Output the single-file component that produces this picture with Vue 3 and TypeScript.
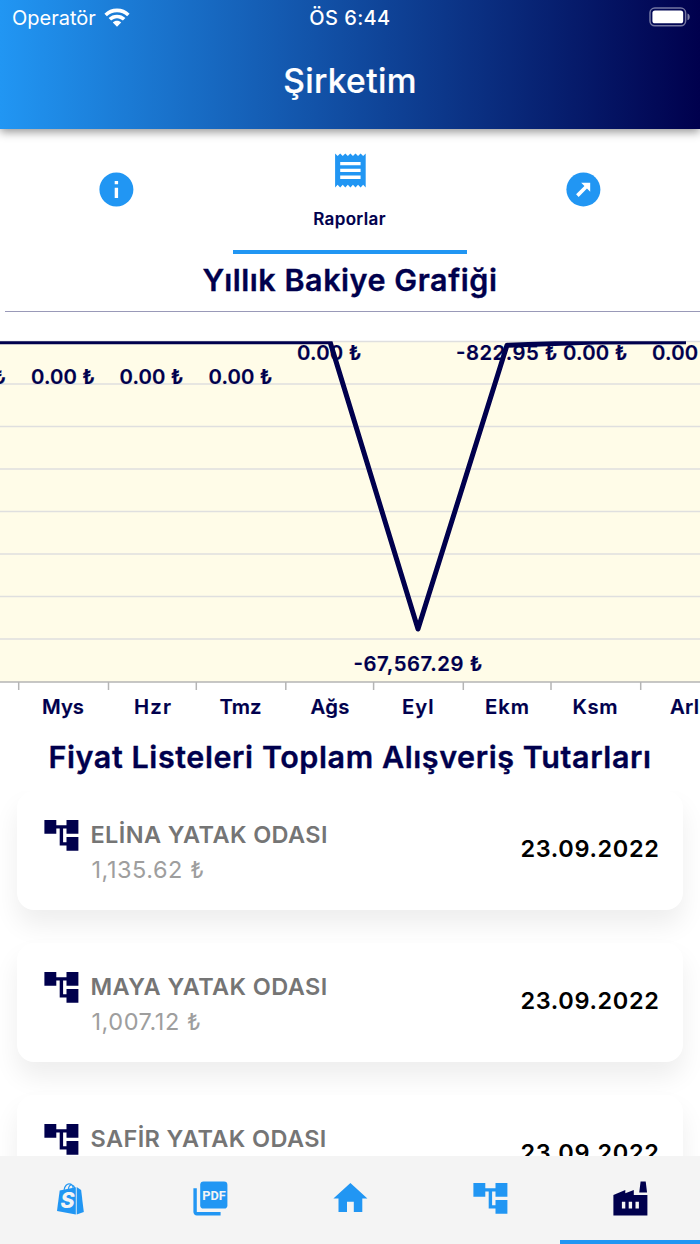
<script setup lang="ts">
interface PriceList {
  name: string
  total: string
  date: string
}
interface Label {
  text: string
  x: number
  y: number
  w: number
}

const lists: PriceList[] = [
  { name: 'ELİNA YATAK ODASI', total: '1,135.62 ₺', date: '23.09.2022' },
  { name: 'MAYA YATAK ODASI', total: '1,007.12 ₺', date: '23.09.2022' },
  { name: 'SAFİR YATAK ODASI', total: '', date: '23.09.2022' },
]

const gridLines = [341.5, 384, 426.5, 469, 511.5, 554, 596.5, 639]
const ticks = [18.7, 108.5, 196.3, 285.8, 373.6, 463.3, 551, 640.7]

const values: Label[] = [
  { text: '0.00 ₺', x: -58, y: 384, w: 64 },
  { text: '0.00 ₺', x: 31, y: 384, w: 64 },
  { text: '0.00 ₺', x: 119.5, y: 384, w: 64 },
  { text: '0.00 ₺', x: 208.5, y: 384, w: 64 },
  { text: '0.00 ₺', x: 297, y: 360.3, w: 64.5 },
  { text: '-67,567.29 ₺', x: 353.5, y: 671, w: 129 },
  { text: '-822.95 ₺', x: 456, y: 360.3, w: 101.5 },
  { text: '0.00 ₺', x: 563, y: 360.3, w: 64.5 },
  { text: '0.00 ₺', x: 652, y: 360.3, w: 64.5 },
]

const months: Label[] = [
  { text: 'Mys', x: 42, y: 714, w: 42 },
  { text: 'Hzr', x: 134, y: 714, w: 37 },
  { text: 'Tmz', x: 219.5, y: 714, w: 42 },
  { text: 'Ağs', x: 310.5, y: 714, w: 39 },
  { text: 'Eyl', x: 402, y: 714, w: 31.5 },
  { text: 'Ekm', x: 485, y: 714, w: 44 },
  { text: 'Ksm', x: 572.5, y: 714, w: 45 },
  { text: 'Arl', x: 670, y: 714, w: 29 },
]

const treePath = 'M22 11V3h-7v3H9V3H2v8h7V8h2v10h4v3h7v-8h-7v3h-2V8h2v3z'
</script>

<template>
  <div class="phone">
    <header class="top">
      <div class="status">
        <div class="carrier">
          <span class="operator">Operatör</span>
          <svg class="wifi" viewBox="0 0 26 20">
            <path d="M13 .6C8 .6 3.700 2.500.4 5.700L2.900 8.300C5.600 5.700 9.100 4.200 13 4.200s7.400 1.500 10.100 4.100l2.500-2.600C22.300 2.500 18 .6 13 .6z" />
            <path d="M13 6.700c-3.300 0-6.200 1.200-8.400 3.300l2.500 2.600C8.700 11.100 10.700 10.200 13 10.200s4.300.9 5.900 2.400l2.500-2.600C19.200 7.900 16.300 6.700 13 6.700z" />
            <path d="M13 12.800c-1.600 0-3.100.6-4.200 1.600L13 18.800l4.200-4.400c-1.100-1-2.600-1.600-4.200-1.600z" />
          </svg>
        </div>
        <span class="clock">ÖS 6:44</span>
        <svg class="battery" viewBox="0 0 42 20">
          <rect x="1" y="1" width="35.600" height="17.800" rx="4.800" fill="none" stroke="#fff" stroke-opacity=".45" stroke-width="1.500" />
          <rect x="3.400" y="3.500" width="30.800" height="12.800" rx="2.600" fill="#fff" />
          <path d="M38.500 6.500c1.500.6 2.200 1.800 2.200 3.400s-.7 2.800-2.200 3.400z" fill="#fff" fill-opacity=".5" />
        </svg>
      </div>
      <h1>Şirketim</h1>
    </header>

    <nav class="tabs">
      <div class="tab">
        <svg class="icon" viewBox="0 0 24 24">
          <path d="M12 2C6.480 2 2 6.480 2 12s4.480 10 10 10 10-4.480 10-10S17.520 2 12 2zm1 15h-2v-6h2v6zm0-8h-2V7h2v2z" />
        </svg>
      </div>
      <div class="tab active">
        <svg class="icon" viewBox="0 0 24 24">
          <path d="M18 17H6v-2h12v2zm0-4H6v-2h12v2zm0-4H6V7h12v2zM3 22l1.500-1.500L6 22l1.500-1.500L9 22l1.500-1.500L12 22l1.500-1.500L15 22l1.500-1.500L18 22l1.500-1.500L21 22V2l-1.500 1.500L18 2l-1.500 1.500L15 2l-1.500 1.500L12 2l-1.500 1.500L9 2 7.500 3.500 6 2 4.500 3.500 3 2v20z" />
        </svg>
        <span class="tab-label">Raporlar</span>
      </div>
      <div class="tab">
        <svg class="icon" viewBox="0 0 24 24">
          <circle cx="12" cy="12" r="10" />
          <path class="cut" d="M10.700 8.100h5.300v5.300l-1.900-1.900-4.900 4.900-1.500-1.500 4.900-4.900z" />
        </svg>
      </div>
    </nav>

    <h2 class="chart-title">Yıllık Bakiye Grafiği</h2>
    <hr />

    <svg class="chart" viewBox="0 320 700 410">
      <defs>
        <clipPath id="plot"><rect x="0" y="341.300" width="700" height="341" /></clipPath>
      </defs>
      <rect x="0" y="341" width="700" height="341" fill="#fffce8" />
      <line v-for="g in gridLines" :key="g" x1="0" x2="700" :y1="g" :y2="g" stroke="#dfdfdf" stroke-width="1.300" />
      <line x1="0" x2="700" y1="682" y2="682" stroke="#b5b5b5" stroke-width="1.700" />
      <line v-for="t in ticks" :key="t" :x1="t" :x2="t" y1="682" y2="690" stroke="#b5b5b5" stroke-width="1.500" />
      <polyline
        points="-20,341.800 330,341.800 418,629 507,345.300 595,342 686,341.800"
        fill="none" stroke="#00004d" stroke-width="5" stroke-linejoin="round" clip-path="url(#plot)"
      />
      <text v-for="(l, i) in values" :key="'v' + i" :x="l.x" :y="l.y" :textLength="l.w">{{ l.text }}</text>
      <text v-for="l in months" :key="l.text" :x="l.x" :y="l.y" :textLength="l.w">{{ l.text }}</text>
    </svg>

    <h2 class="list-title">Fiyat Listeleri Toplam Alışveriş Tutarları</h2>

    <section class="list">
      <article v-for="p in lists" :key="p.name" class="card">
        <svg class="icon tree" viewBox="0 0 24 24"><path :d="treePath" /></svg>
        <div class="info">
          <div class="name">{{ p.name }}</div>
          <div v-if="p.total" class="total">{{ p.total }}</div>
        </div>
        <div class="date">{{ p.date }}</div>
      </article>
    </section>

    <footer class="bottom">
      <div class="item">
        <svg class="icon" viewBox="0 0 24 24">
          <path d="M5.700 7.400 15.200 5.400V21.500L4.100 19.400z" />
          <path d="M15.700 5.300 18.300 7 19.900 20 15.700 21.400z" />
          <path class="handle" d="M8.300 7C8.500 4.800 10.200 3.100 11.600 3.500c1.300.2 1.900 1.100 2 2.300M10.800 6.400c.3-1.700 1.100-2.600 2.200-2.300.9.200 1.400.9 1.500 1.800" />
          <text class="mark-s" x="10.300" y="17.600" text-anchor="middle">S</text>
        </svg>
      </div>
      <div class="item">
        <svg class="icon" viewBox="0 0 24 24">
          <rect x="6" y="2" width="16" height="16" rx="2" />
          <path d="M4 6H2v14c0 1.100.9 2 2 2h14v-2H4z" />
          <text class="mark-pdf" x="7.200" y="12.900" textLength="13.800" lengthAdjust="spacingAndGlyphs">PDF</text>
        </svg>
      </div>
      <div class="item">
        <svg class="icon" viewBox="0 0 24 24"><path d="M10 20v-6h4v6h5v-8h3L12 3 2 12h3v8z" /></svg>
      </div>
      <div class="item">
        <svg class="icon" viewBox="0 0 24 24"><path :d="treePath" /></svg>
      </div>
      <div class="item selected">
        <svg class="icon" viewBox="0 0 24 24">
          <path d="M22 22H2V10l7-3v2l5-2v3h8v12zM17.200 8.500 18 2h3l.8 6.500h-4.600zM11 18h2v-4h-2v4zm-4 0h2v-4H7v4zm10-4h-2v4h2v-4z" />
        </svg>
      </div>
    </footer>
  </div>
</template>

<style>
body {
  margin: 0;
  background: #fff;
}
</style>

<style scoped>
.phone {
  width: 700px;
  height: 1244px;
  overflow: hidden;
  display: flex;
  flex-direction: column;
  background: #fff;
  color: #00004d;
  font-family: Inter, "Liberation Sans", sans-serif;
}
h1,
h2 {
  margin: 0;
  white-space: nowrap;
  text-align: center;
}
h2 {
  -webkit-text-stroke: 0.35px currentColor;
}
.top {
  flex: none;
  height: 128.500px;
  color: #fff;
  background: linear-gradient(90deg, #2196f3, #00004d);
  box-shadow: 0 3px 9px rgba(0, 0, 0, 0.42);
}
.status {
  height: 36px;
  display: grid;
  grid-template-columns: 1fr auto 1fr;
  align-items: center;
  padding: 0 9px 0 12px;
  font-size: 20px;
  line-height: 36px;
}
.carrier {
  display: flex;
  align-items: center;
  gap: 8px;
}
.wifi {
  width: 26px;
  height: 20px;
  margin-top: -1px;
  fill: #fff;
}
.clock {
  margin: 0 3px 0 0;
  font-weight: 500;
  letter-spacing: 0.4px;
}
.battery {
  width: 42px;
  height: 20px;
  margin-top: -2px;
  justify-self: end;
}
h1 {
  font-size: 33.500px;
  font-weight: 500;
  line-height: 40px;
  padding-top: 25px;
  letter-spacing: 0.35px;
  -webkit-text-stroke: 0.2px currentColor;
}
.tabs {
  flex: none;
  height: 125px;
  display: grid;
  grid-template-columns: repeat(3, 1fr);
}
.tab {
  display: flex;
  flex-direction: column;
  align-items: center;
  justify-content: center;
  padding-bottom: 3px;
}
.tab.active {
  justify-content: flex-start;
  padding: 21.500px 0 0;
  border-bottom: 4px solid #2196f3;
}
.tab-label {
  margin-top: 17.500px;
  margin-right: 1px;
  font-size: 17px;
  line-height: 22px;
  font-weight: 600;
  letter-spacing: 0.35px;
  -webkit-text-stroke: 0.15px currentColor;
}
.icon {
  display: block;
  width: 40.800px;
  height: 40.800px;
  fill: #2196f3;
}
.cut {
  fill: #fff;
}
.chart-title {
  flex: none;
  font-size: 30.500px;
  font-weight: 600;
  line-height: 40px;
  padding-top: 6px;
  height: 51px;
  letter-spacing: 0.55px;
}
hr {
  flex: none;
  width: 695px;
  height: 1.500px;
  margin: 0 0 0 5px;
  border: 0;
  background: #9999b8;
}
.chart {
  flex: none;
  display: block;
  width: 700px;
  height: 410px;
  margin-top: 8px;
}
.chart text {
  font-size: 20.300px;
  font-weight: 600;
  fill: #00004d;
  stroke: #00004d;
  stroke-width: 0.2px;
}
.list-title {
  flex: none;
  font-size: 30.500px;
  font-weight: 600;
  line-height: 40px;
  padding-top: 7px;
  height: 54px;
  letter-spacing: 0.58px;
}
.list {
  flex: 1;
  min-height: 0;
  overflow: hidden;
  padding: 0 17px;
}
.card {
  display: flex;
  box-sizing: border-box;
  height: 119px;
  margin-bottom: 33px;
  padding: 24px 23.500px 0 24px;
  border-radius: 17px;
  background: #fff;
  box-shadow: 0 15px 26px rgba(0, 0, 0, 0.07);
}
.tree {
  flex: none;
  fill: #00004d;
}
.info {
  flex: 1;
  margin-left: 8.700px;
  padding-top: 3px;
}
.name {
  font-size: 23.500px;
  line-height: 34px;
  font-weight: 600;
  letter-spacing: 0.4px;
  color: #757575;
}
.total {
  padding-left: 1px;
  font-size: 23.500px;
  line-height: 36px;
  letter-spacing: 0.55px;
  color: #9e9e9e;
}
.date {
  padding-top: 18px;
  font-size: 23.500px;
  line-height: 32px;
  font-weight: 600;
  letter-spacing: 0.63px;
  color: #000;
}
.bottom {
  flex: none;
  height: 88px;
  display: grid;
  grid-template-columns: repeat(5, 1fr);
  background: #f4f4f4;
}
.item {
  display: flex;
  justify-content: center;
  align-items: flex-start;
  box-sizing: border-box;
  padding-top: 21.500px;
}
.selected {
  border-bottom: 4px solid #2196f3;
}
.selected .icon {
  fill: #00004d;
}
.handle {
  fill: none;
  stroke: #2196f3;
  stroke-width: 0.7;
}
.mark-s {
  font-size: 12.500px;
  font-weight: 800;
  font-style: italic;
  fill: #f4f4f4;
}
.mark-pdf {
  font-size: 7.900px;
  font-weight: 700;
  font-family: Roboto, Inter, sans-serif;
  fill: #f4f4f4;
}
</style>
